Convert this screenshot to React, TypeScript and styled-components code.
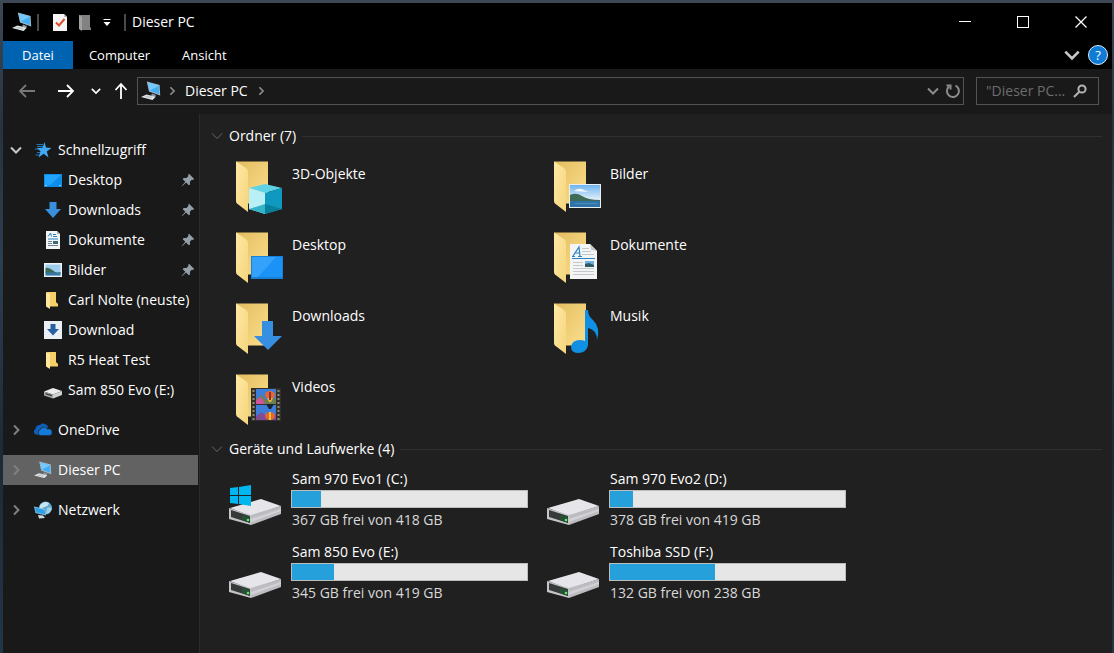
import React from 'react';
import styled, { createGlobalStyle } from 'styled-components';

const GlobalStyle = createGlobalStyle`
  * { box-sizing: border-box; }
  body {
    margin: 0;
    background: #000;
    color: #fff;
    font-family: "Open Sans", "Noto Sans", sans-serif;
    font-size: 14px;
    line-height: 20px;
  }
  button, input { font: inherit; color: inherit; }
  button { background: none; border: 0; padding: 0; margin: 0; text-align: left; }
  svg { display: block; flex: none; }
  ul { list-style: none; margin: 0; padding: 0; }
`;

/* ---------- window frame ---------- */

const Desktop = styled.div`
  min-height: 100vh;
  display: flex;
  padding: 3px 2px 0 3px;
  background: linear-gradient(180deg, #3d4756 0%, #26333f 20%, #2c3f50 40%, #1b2a38 70%, #233646 100%);
`;

const Window = styled.div`
  flex: 1;
  min-width: 0;
  display: flex;
  flex-direction: column;
  background: #191919;
`;

const TitleBar = styled.header`
  display: flex;
  align-items: center;
  height: 38px;
  padding: 0 2px 0 9px;
  background: #000;
`;

const Title = styled.h1`
  flex: 1;
  margin: 0;
  font-size: 14px;
  font-weight: 400;
`;

const Separator = styled.span<{ $gap: number }>`
  width: 2px;
  height: 17px;
  margin-right: ${(p) => p.$gap}px;
  border: 1px solid #4a4a4a;
`;

const QuickButtons = styled.div`
  display: flex;
  align-items: center;
  gap: 9px;
  margin: 0 12px 0 5px;
`;

const CaptionButton = styled.button`
  width: 58px;
  height: 38px;
  display: flex;
  align-items: center;
  justify-content: center;
`;

const TabBar = styled.nav`
  display: flex;
  height: 28px;
  padding-right: 4px;
  align-items: center;
  background: #000;
`;

const Tab = styled.button<{ $active?: boolean }>`
  height: 28px;
  padding: 0 ${(p) => (p.$active ? 19 : 16)}px;
  font-size: 13px;
  background: ${(p) => (p.$active ? '#0063b1' : 'transparent')};
`;

const TabTools = styled.div`
  display: flex;
  align-items: center;
  gap: 8px;
  margin-left: auto;
`;

/* ---------- address row ---------- */

const NavRow = styled.div`
  display: flex;
  align-items: center;
  height: 45px;
  padding: 0 13px 2px 15px;
`;

const NavButtons = styled.div`
  display: flex;
  align-items: center;
  gap: 12px;
  margin-right: 8px;
`;

const NavButton = styled.button<{ $width: number }>`
  width: ${(p) => p.$width}px;
`;

const AddressBar = styled.div`
  flex: 1;
  display: flex;
  align-items: center;
  gap: 6px;
  height: 28px;
  padding: 0 2px 0 3px;
  border: 1px solid #535353;
`;

const Crumb = styled.button`
  padding: 0 2px;
`;

const AddressTools = styled.div`
  display: flex;
  align-items: center;
  gap: 6px;
  margin-left: auto;
`;

const SearchBox = styled.label`
  display: flex;
  align-items: center;
  width: 123px;
  height: 28px;
  margin-left: 12px;
  padding: 0 11px 0 9px;
  border: 1px solid #535353;
`;

const SearchInput = styled.input`
  flex: 1;
  min-width: 0;
  padding: 0;
  border: 0;
  outline: 0;
  background: transparent;
  &::placeholder { color: #6d6d6d; opacity: 1; }
`;

/* ---------- body ---------- */

const Body = styled.div`
  flex: 1;
  display: flex;
`;

const Sidebar = styled.nav`
  width: 197px;
  flex: none;
  padding: 21px 1px 0 0;
  border-right: 1px solid #2b2b2b;
`;

const Branch = styled.section`
  margin-bottom: 10px;
`;

const TreeRow = styled.button<{ $selected?: boolean }>`
  display: flex;
  align-items: center;
  width: 100%;
  height: 30px;
  padding-left: 7px;
  white-space: nowrap;
  background: ${(p) => (p.$selected ? '#626262' : 'transparent')};
`;

const TreeIcons = styled.span`
  display: flex;
  align-items: center;
  gap: 12px;
  margin-right: 6px;
`;

const SubRow = styled(TreeRow)`
  gap: 6px;
  padding: 0 3px 0 41px;
`;

const SubLabel = styled.span`
  flex: 1;
`;

const Main = styled.main`
  flex: 1;
  min-width: 0;
  padding: 12px 10px 0 11px;
  background: #202020;
`;

const GroupHeader = styled.h2`
  display: flex;
  align-items: center;
  gap: 6px;
  margin: 0;
  font-size: 14px;
  font-weight: 400;
  &::after {
    content: '';
    flex: 1;
    height: 1px;
    background: #303030;
  }
`;

const TileGrid = styled.ul<{ $rowHeight: number; $top: number; $bottom?: number }>`
  display: grid;
  grid-template-columns: repeat(auto-fill, 318px);
  grid-auto-rows: ${(p) => p.$rowHeight}px;
  padding: ${(p) => p.$top}px 0 0 18px;
`;

const Tile = styled.button`
  display: flex;
  align-items: flex-start;
  gap: 7px;
  width: 100%;
`;

const TileLabel = styled.span`
  padding-top: 4px;
`;

const DriveSection = styled.section`
  margin-top: -5px;
`;

const DriveTile = styled(Tile)`
  gap: 10px;
`;

const DriveIconBox = styled.span`
  padding-top: 15px;
`;

const DriveInfo = styled.span`
  display: flex;
  flex-direction: column;
  width: 237px;
`;

const DriveName = styled.span`
  padding: 0 0 2px 1px;
  line-height: 19px;
`;

const DriveSpace = styled.span`
  padding-left: 1px;
  line-height: 24px;
  color: #d8d8d8;
`;

const Meter = styled.span`
  display: block;
  height: 18px;
  border: 1px solid #bcbcbc;
  background: #e6e6e6;
`;

const MeterFill = styled.span<{ $share: number }>`
  display: block;
  height: 100%;
  width: ${(p) => p.$share * 100}%;
  background: #26a0da;
`;

/* ---------- small icons ---------- */

const PcIcon = ({ size = 20 }: { size?: number }) => (
  <svg width={size} height={size} viewBox="0 0 20 20">
    <path d="M5.800 .5 L18.600 4 L19.200 14.600 L8 10.600 Z" fill="#aebfca" />
    <path d="M6.800 1.600 L17.800 4.700 L18.300 13.200 L8.600 9.800 Z" fill="#43aff2" />
    <path d="M6.800 1.600 L17.800 4.700 L8.600 9.800 Z" fill="#74c9fa" />
    <path d="M11 12.500 L15 14 L14 16 L10 14.500 Z" fill="#8d979e" />
    <path d="M0 16 L5.500 13.600 L14.800 15.800 L11.500 19 Z" fill="#e3e8eb" />
    <path d="M3 16 L6 14.600 L12 16 L10 17.600 Z" fill="#c0c8cd" />
  </svg>
);

const Chevron = ({ dir, size = 12, color = '#fff', weight = 2 }: { dir: 'down' | 'right'; size?: number; color?: string; weight?: number }) => (
  <svg width={size} height={size} viewBox="0 0 12 12" fill="none" stroke={color} strokeWidth={weight}>
    <path d={dir === 'down' ? 'M1 3.500 L6 8.500 L11 3.500' : 'M4 1.500 L8.500 6 L4 10.500'} />
  </svg>
);

const PropertiesIcon = () => (
  <svg width="16" height="19" viewBox="0 0 16 19">
    <path d="M1 1 H12 L15 4 V18 H1 Z" fill="#f6f4f4" />
    <path d="M12 1 V4 H15 Z" fill="#b9b9b9" />
    <path d="M4 9.500 L7 12.500 L12.500 6" fill="none" stroke="#d9502f" strokeWidth="2" />
  </svg>
);

const NewFolderIcon = () => (
  <svg width="16" height="19" viewBox="0 0 16 19">
    <path d="M2 2 H13 V14 L14 15 V17 H5 L2 16 Z" fill="#828282" />
    <path d="M2 2 L5 4 V18 L2 16 Z" fill="#a2a2a2" />
  </svg>
);

const CustomizeIcon = () => (
  <svg width="10" height="9" viewBox="0 0 10 9" fill="#fff">
    <path d="M1.500 1 H8.500 V2 H1.500 Z M1.500 4 H8.500 L5 8 Z" />
  </svg>
);

const MinimizeIcon = () => (
  <svg width="14" height="14" viewBox="0 0 14 14"><path d="M1 6.500 H13" stroke="#fff" /></svg>
);
const MaximizeIcon = () => (
  <svg width="14" height="14" viewBox="0 0 14 14"><rect x="1.500" y="1.500" width="11" height="11" fill="none" stroke="#fff" /></svg>
);
const CloseIcon = () => (
  <svg width="14" height="14" viewBox="0 0 14 14"><path d="M1.500 1.500 L12.500 12.500 M12.500 1.500 L1.500 12.500" stroke="#fff" strokeWidth="1.300" /></svg>
);

const HelpBadge = styled.button`
  display: flex;
  align-items: center;
  justify-content: center;
  width: 20px;
  height: 20px;
  border: 1px solid #d9ecfb;
  border-radius: 50%;
  background: #0f7bd6;
  font-size: 13px;
`;

const Arrow = ({ dir, color = '#fff' }: { dir: 'left' | 'right' | 'up'; color?: string }) => {
  const paths = {
    left: 'M17 9 H2 M8 3 L2 9 L8 15',
    right: 'M1 9 H16 M10 3 L16 9 L10 15',
    up: 'M8 17 V2 M2.500 8 L8 2 L13.500 8',
  };
  const width = dir === 'up' ? 16 : 18;
  return (
    <svg width={width} height="18" viewBox={`0 0 ${width} 18`} fill="none" stroke={color} strokeWidth="1.800">
      <path d={paths[dir]} />
    </svg>
  );
};

const RefreshIcon = () => (
  <svg width="16" height="16" viewBox="0 0 16 16" fill="none" stroke="#8c8c8c" strokeWidth="2">
    <path d="M10.500 2.600 A6 6 0 1 1 4 3.500" />
    <path d="M1.500 2.500 H5.500 V6.500" />
  </svg>
);

const SearchIcon = () => (
  <svg width="14" height="14" viewBox="0 0 14 14" fill="none" stroke="#b4b4b4" strokeWidth="2">
    <circle cx="9" cy="5" r="3.600" />
    <path d="M6.300 7.700 L1 13" />
  </svg>
);

const PinIcon = () => (
  <svg width="14" height="14" viewBox="0 0 14 14" fill="#93a0aa">
    <path d="M8 .8 L13.200 6 L11.800 6.900 L11 6.600 L8.900 8.700 L9 11.500 L7.800 12.300 L5.100 9.600 L1 13.300 L.7 13 L4.300 8.800 L1.700 6.200 L2.600 5 L5.400 5.100 L7.500 3 L7.100 2.100 Z" />
  </svg>
);

const StarIcon = () => (
  <svg width="18" height="18" viewBox="0 0 18 18">
    <path d="M2.500 3.500 H9 M3 5.500 H9 M1 8 H7 M3 11.500 H7 M1.500 14 H6" stroke="#2777b3" />
    <path d="M10.500 1 L12 6.600 L17.500 7 L12.800 10.500 L14.500 16.500 L9.700 12.800 L4.500 16.500 L6.600 10.600 L3 7 L8.500 6.800 Z" fill="#3fa9f5" />
  </svg>
);

const DesktopSmall = () => (
  <svg width="18" height="18" viewBox="0 0 18 18">
    <rect y="3" width="18" height="13" fill="#0e8de8" />
    <path d="M1 4 H17 L6 14 H1 Z" fill="#22a4fa" />
    <path d="M1 14.500 H3 M15 14.500 H17" stroke="#75c8ff" />
  </svg>
);

const DownloadsSmall = () => (
  <svg width="18" height="18" viewBox="0 0 18 18">
    <path d="M5.500 1 H12.500 V8 H17 L9 17 L1 8 H5.500 Z" fill="#3a8fdc" />
  </svg>
);

const DocumentSmall = () => (
  <svg width="18" height="18" viewBox="0 0 18 18">
    <path d="M2 0 H13 L16 3 V18 H2 Z" fill="#f2f5f7" />
    <path d="M13 0 V3 H16 Z" fill="#a8b0b6" />
    <path d="M4 5.500 L6.500 2 L7.500 5.500 M9 3.500 H12 M9 5.500 H13 M4 8 H14" stroke="#2a83bd" fill="none" />
    <path d="M4 10.500 H8 M4 12.500 H8 M4 14.500 H14" stroke="#76838c" />
    <rect x="9" y="10" width="5" height="3" fill="#3f6878" />
  </svg>
);

const PictureSmall = () => (
  <svg width="18" height="18" viewBox="0 0 18 18">
    <rect y="2" width="18" height="14" fill="#eef3f6" />
    <rect x="1.500" y="3.500" width="15" height="11" fill="#9fcdf0" />
    <path d="M1.500 7 Q5 6 9 9.500 T16.500 11 V12 H1.500 Z" fill="#3d6b58" />
    <rect x="1.500" y="11.500" width="15" height="3" fill="#3777a6" />
  </svg>
);

const FolderSmall = () => (
  <svg width="18" height="18" viewBox="0 0 18 18">
    <path d="M3 1 H12 V11 L14 13 V15.500 H5 Z" fill="#f5cf68" />
    <path d="M2 1 L6 3 V18 L2 15.500 Z" fill="#ffe89b" />
  </svg>
);

const DownloadBoxSmall = () => (
  <svg width="18" height="18" viewBox="0 0 18 18">
    <rect width="18" height="18" fill="#e9eff5" />
    <path d="M6.500 3 H11.500 V8 H15 L9 14.500 L3 8 H6.500 Z" fill="#2b5fa5" />
  </svg>
);

const DriveSmall = () => (
  <svg width="18" height="18" viewBox="0 0 18 18">
    <path d="M0 10.500 L9 7 L18 10 L9 13.500 Z" fill="#eceded" />
    <path d="M0 10.500 L9 13.500 V17.500 L0 14.500 Z" fill="#a9abab" />
    <path d="M9 13.500 L18 10 V14 L9 17.500 Z" fill="#cfd1d1" />
    <path d="M1.500 12 L8 14 V15.500 L1.500 13.500 Z" fill="#3c4040" />
  </svg>
);

const CloudIcon = () => (
  <svg width="18" height="18" viewBox="0 0 18 18">
    <path d="M2 13.500 A3 3 0 0 1 1.500 8 A4 4 0 0 1 6 4 A5 5 0 0 1 14 5.500 L12 10 L6 14 Z" fill="#0f5fb8" />
    <path d="M6 14.500 A3 3 0 0 1 6 9 A4.200 4.200 0 0 1 13.500 8 A3.300 3.300 0 0 1 16 14.500 Z" fill="#1479d8" stroke="#1b2836" strokeWidth=".7" />
  </svg>
);

const NetworkIcon = () => (
  <svg width="18" height="18" viewBox="0 0 18 18">
    <circle cx="11.500" cy="7" r="6.500" fill="#5ba8cf" />
    <path d="M6 4 Q10 -1 15 2 Q14 6 10 6 Q8 9 5.500 8 Z" fill="#c7e4ef" />
    <path d="M13 7 Q17 5 17.800 8 Q16 13 12 13 Z" fill="#9fd0e4" />
    <path d="M0 5.500 L11 8 L12 14.500 L1.500 12 Z" fill="#8cc6ea" />
    <path d="M.8 6.500 L10.500 8.800 L11.200 13.500 L2 11.300 Z" fill="#2f9fe6" />
    <path d="M4 14 L9 14.500 L11 17 L5 17.500 Z" fill="#cfdade" />
  </svg>
);

/* ---------- large icons ---------- */

const FolderIcon = ({ children }: { children: React.ReactNode }) => (
  <svg width="56" height="56" viewBox="0 0 56 56">
    <defs>
      <linearGradient id="folderBack" x1="0" y1="0" x2="1" y2="1">
        <stop offset="0" stopColor="#e3bd60" />
        <stop offset="1" stopColor="#fbdf8c" />
      </linearGradient>
      <linearGradient id="folderFlap" x1="0" y1="0" x2="1" y2="1">
        <stop offset="0" stopColor="#ffe9a6" />
        <stop offset="1" stopColor="#f5d57c" />
      </linearGradient>
    </defs>
    <path d="M7 1.500 H39 V43.500 H17 L7 40 Z" fill="url(#folderBack)" />
    <path d="M7 1.500 L17 8 Q19 9.500 19 12 V52 L8 43.500 Q7 42.500 7 41 Z" fill="url(#folderFlap)" />
    {children}
  </svg>
);

const Objects3d = () => (
  <FolderIcon>
    <path d="M20 28 L36 24 L53 28 L36 33 Z" fill="#5fd3e6" />
    <path d="M20 28 L36 33 V54 L20 49 Z" fill="#b9f0f6" />
    <path d="M53 28 L36 33 V54 L53 49 Z" fill="#1099c0" />
    <path d="M20 49 L36 44 V54 Z" fill="#35b3c8" />
    <path d="M53 49 L36 44 V54 Z" fill="#087f9b" />
  </FolderIcon>
);

const DesktopFolder = () => (
  <FolderIcon>
    <rect x="22" y="25" width="32" height="23" fill="#1581d8" />
    <path d="M23 26 H53 V46 H23 Z" fill="#1b93f6" />
    <path d="M23 26 H47 L29 46 H23 Z" fill="#34a2fb" />
  </FolderIcon>
);

const DownloadsFolder = () => (
  <FolderIcon>
    <path d="M33 19 H44 V34 H53 L39 48 L25 34 H33 Z" fill="#368fe0" />
  </FolderIcon>
);

const VideosFolder = () => (
  <FolderIcon>
    <rect x="22" y="15" width="30" height="33" fill="#33302a" />
    <rect x="27" y="16" width="20" height="15" fill="#3d7ed8" />
    <rect x="27" y="32" width="20" height="15" fill="#3d7ed8" />
    <path d="M27 26 L33 22 L37 27 L47 25 V31 H27 Z" fill="#6f7f54" />
    <path d="M27 27 L32 24 L36 31 H27 Z" fill="#d0559a" />
    <path d="M27 43 L33 39 L38 44 L47 41 V47 H27 Z" fill="#7e4d96" />
    <ellipse cx="41" cy="22" rx="5" ry="4" fill="#e9652a" />
    <path d="M38 25 H44 L42 29 H40 Z" fill="#e8b731" />
    <path d="M40 19 H42 V27 H40 Z" fill="#8a2f3f" />
    <path d="M37 31 H45 L42 36 H40 Z" fill="#17262e" />
    <ellipse cx="41" cy="43" rx="5" ry="4" fill="#e9652a" />
    <path d="M40 39 H42 V47 H40 Z" fill="#f1c33c" />
    <path d="M24.500 17 V47 M49.500 17 V47" stroke="#8f8c80" strokeWidth="2" strokeDasharray="2 2" />
  </FolderIcon>
);

const PicturesFolder = () => (
  <FolderIcon>
    <defs>
      <linearGradient id="skyTone" x1="0" y1="0" x2="0" y2="1">
        <stop offset="0" stopColor="#6fb4ee" />
        <stop offset="1" stopColor="#e3f1fa" />
      </linearGradient>
    </defs>
    <rect x="22" y="24" width="32" height="24" fill="#e9eef1" />
    <rect x="23" y="25" width="30" height="15" fill="url(#skyTone)" />
    <path d="M27 31 Q32 27 37 30 T49 30 Q43 33 27 31 Z" fill="#f1f8fd" />
    <path d="M23 35 Q29 32 35 36 T53 40 V42 H23 Z" fill="#3f6b58" />
    <path d="M23 41 H53 V47 H23 Z" fill="#2f74a9" />
    <path d="M28 43.500 H50" stroke="#4d8dba" />
  </FolderIcon>
);

const DocumentsFolder = () => (
  <FolderIcon>
    <path d="M23 13 H43 L50 20 V48 H23 Z" fill="#f4f5f6" />
    <path d="M43 13 L44 19 L50 20 Z" fill="#c6cacd" />
    <path d="M26 25 L32 16 L33 25 M28 22 H33 M25 25.500 H28 M31 25.500 H35" fill="none" stroke="#2a82c0" strokeWidth="1.200" />
    <path d="M35 17.500 H42 M35 20.500 H44 M35 23.500 H47 M26 31.500 H36 M26 34.500 H36 M26 37.500 H47 M26 40.500 H47 M26 43.500 H47" stroke="#c5c9cc" />
    <path d="M25 27.500 H48" stroke="#2a82c0" />
    <rect x="38" y="30" width="9" height="6" fill="#6eb1dc" />
    <path d="M38 33 L42 32 L47 34 V36 H38 Z" fill="#2d5a63" />
  </FolderIcon>
);

const MusicFolder = () => (
  <FolderIcon>
    <path d="M38 8 H41 Q41 14 46 18 Q54 26 50 38 Q50 28 41 26 V43 Q40 50 32 51 Q24 51 24 45 Q25 38 33 38 Q36 38 38 39 Z" fill="#0f90e4" />
  </FolderIcon>
);

const DriveIcon = ({ system }: { system?: boolean }) => (
  <svg width="52" height="42" viewBox="0 0 52 42">
    <path d="M1 24 L32 15 L52 22 L22 32 Z" fill="#e6e6ea" />
    <path d="M22 31 L52 22 V30 L22 41 Z" fill="#bcbcc1" />
    <path d="M22 35 L52 25 V27 L22 38 Z" fill="#d2d2d6" />
    <path d="M0 24 L22 31 V41 L0 35 Z" fill="#c5c5c9" />
    <path d="M2 26 L21 32 V39 L2 33 Z" fill="#363a39" />
    <path d="M13 31 L21 33 V39 L13 36 Z" fill="#245033" />
    <circle cx="19" cy="36" r="1.300" fill="#68e06c" />
    {system && (
      <path d="M1 4 L9 3 V11 H1 Z M10 3 L22 1 V11 H10 Z M1 12 H9 V20 L1 19 Z M10 12 H22 V22 L10 20 Z" fill="#00b7f1" />
    )}
  </svg>
);

/* ---------- data ---------- */

const quickAccess = [
  { name: 'Desktop', icon: <DesktopSmall />, pinned: true },
  { name: 'Downloads', icon: <DownloadsSmall />, pinned: true },
  { name: 'Dokumente', icon: <DocumentSmall />, pinned: true },
  { name: 'Bilder', icon: <PictureSmall />, pinned: true },
  { name: 'Carl Nolte (neuste)', icon: <FolderSmall /> },
  { name: 'Download', icon: <DownloadBoxSmall /> },
  { name: 'R5 Heat Test', icon: <FolderSmall /> },
  { name: 'Sam 850 Evo (E:)', icon: <DriveSmall /> },
];

const roots = [
  { name: 'OneDrive', icon: <CloudIcon /> },
  { name: 'Dieser PC', icon: <PcIcon size={18} />, selected: true },
  { name: 'Netzwerk', icon: <NetworkIcon /> },
];

const folders = [
  { name: '3D-Objekte', icon: <Objects3d /> },
  { name: 'Bilder', icon: <PicturesFolder /> },
  { name: 'Desktop', icon: <DesktopFolder /> },
  { name: 'Dokumente', icon: <DocumentsFolder /> },
  { name: 'Downloads', icon: <DownloadsFolder /> },
  { name: 'Musik', icon: <MusicFolder /> },
  { name: 'Videos', icon: <VideosFolder /> },
];

const drives = [
  { name: 'Sam 970 Evo1 (C:)', free: 367, total: 418, system: true },
  { name: 'Sam 970 Evo2 (D:)', free: 378, total: 419 },
  { name: 'Sam 850 Evo (E:)', free: 345, total: 419 },
  { name: 'Toshiba SSD (F:)', free: 132, total: 238 },
];

export default function App() {
  return (
    <Desktop>
      <GlobalStyle />
      <Window>
        <TitleBar>
          <PcIcon />
          <QuickButtons>
            <Separator $gap={4} />
            <button aria-label="Eigenschaften"><PropertiesIcon /></button>
            <button aria-label="Neuer Ordner"><NewFolderIcon /></button>
            <button aria-label="Symbolleiste anpassen"><CustomizeIcon /></button>
          </QuickButtons>
          <Separator $gap={6} />
          <Title>Dieser PC</Title>
          <CaptionButton aria-label="Minimieren"><MinimizeIcon /></CaptionButton>
          <CaptionButton aria-label="Maximieren"><MaximizeIcon /></CaptionButton>
          <CaptionButton aria-label="Schließen"><CloseIcon /></CaptionButton>
        </TitleBar>

        <TabBar>
          <Tab $active>Datei</Tab>
          <Tab>Computer</Tab>
          <Tab>Ansicht</Tab>
          <TabTools>
            <button aria-label="Menüband erweitern"><Chevron dir="down" size={16} color="#c8c8c8" /></button>
            <HelpBadge aria-label="Hilfe">?</HelpBadge>
          </TabTools>
        </TabBar>

        <NavRow>
          <NavButtons>
            <NavButton $width={27} aria-label="Zurück"><Arrow dir="left" color="#777" /></NavButton>
            <NavButton $width={22} aria-label="Vorwärts"><Arrow dir="right" /></NavButton>
            <NavButton $width={10} aria-label="Verlauf"><Chevron dir="down" size={10} /></NavButton>
            <NavButton $width={16} aria-label="Nach oben"><Arrow dir="up" /></NavButton>
          </NavButtons>
          <AddressBar>
            <PcIcon />
            <Chevron dir="right" size={10} color="#8c8c8c" />
            <Crumb>Dieser PC</Crumb>
            <Chevron dir="right" size={10} color="#8c8c8c" />
            <AddressTools>
              <button aria-label="Vorherige Orte"><Chevron dir="down" color="#8c8c8c" /></button>
              <button aria-label="Aktualisieren"><RefreshIcon /></button>
            </AddressTools>
          </AddressBar>
          <SearchBox>
            <SearchInput type="text" aria-label="Suchen" placeholder={'"Dieser PC...'} />
            <SearchIcon />
          </SearchBox>
        </NavRow>

        <Body>
          <Sidebar>
            <Branch>
              <TreeRow>
                <TreeIcons><Chevron dir="down" color="#c8c8c8" /><StarIcon /></TreeIcons>
                Schnellzugriff
              </TreeRow>
              {quickAccess.map((q) => (
                <SubRow key={q.name}>
                  {q.icon}
                  <SubLabel>{q.name}</SubLabel>
                  {q.pinned && <PinIcon />}
                </SubRow>
              ))}
            </Branch>
            {roots.map((r) => (
              <Branch key={r.name}>
                <TreeRow $selected={r.selected}>
                  <TreeIcons><Chevron dir="right" color="#808080" />{r.icon}</TreeIcons>
                  {r.name}
                </TreeRow>
              </Branch>
            ))}
          </Sidebar>

          <Main>
            <section>
              <GroupHeader><Chevron dir="down" color="#6a6a6a" weight={1} />Ordner (7)</GroupHeader>
              <TileGrid $rowHeight={71} $top={14}>
                {folders.map((f) => (
                  <li key={f.name}>
                    <Tile>
                      {f.icon}
                      <TileLabel>{f.name}</TileLabel>
                    </Tile>
                  </li>
                ))}
              </TileGrid>
            </section>

            <DriveSection>
              <GroupHeader><Chevron dir="down" color="#6a6a6a" weight={1} />Geräte und Laufwerke (4)</GroupHeader>
              <TileGrid $rowHeight={73} $top={10}>
                {drives.map((d) => (
                  <li key={d.name}>
                    <DriveTile>
                      <DriveIconBox><DriveIcon system={d.system} /></DriveIconBox>
                      <DriveInfo>
                        <DriveName>{d.name}</DriveName>
                        <Meter role="meter" aria-label={d.name} aria-valuemin={0} aria-valuemax={d.total} aria-valuenow={d.total - d.free}>
                          <MeterFill $share={(d.total - d.free) / d.total} />
                        </Meter>
                        <DriveSpace>{d.free} GB frei von {d.total} GB</DriveSpace>
                      </DriveInfo>
                    </DriveTile>
                  </li>
                ))}
              </TileGrid>
            </DriveSection>
          </Main>
        </Body>
      </Window>
    </Desktop>
  );
}
